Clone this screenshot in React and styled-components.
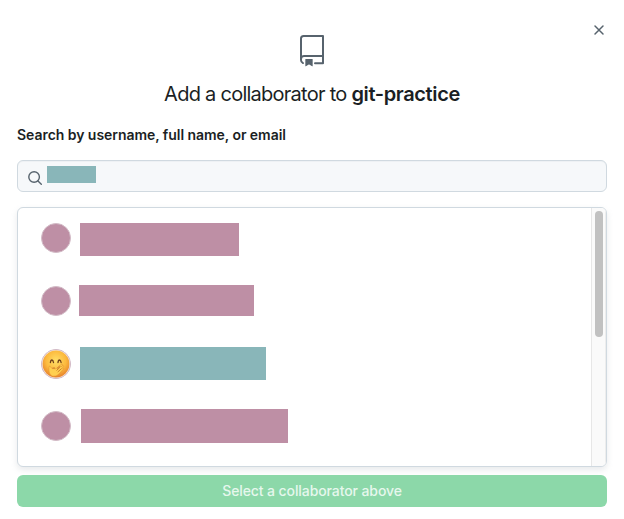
import React from "react";
import styled, { createGlobalStyle } from "styled-components";

const GlobalStyle = createGlobalStyle`
  *, *::before, *::after { box-sizing: border-box; }
  body { margin: 0; background: #fff; overflow: hidden; }
`;

const Dialog = styled.main`
  position: relative;
  display: flex;
  flex-direction: column;
  width: 624px;
  height: 519px;
  padding: 35px 17px 0;
  background: #fff;
  color: #1b1f24;
  font-family: Inter, "Liberation Sans", sans-serif;
`;

const CloseButton = styled.button`
  position: absolute;
  top: 22px;
  right: 17px;
  display: flex;
  padding: 0;
  border: 0;
  background: none;
  color: #57636d;
`;

const RepoIcon = styled.svg`
  display: block;
  align-self: center;
  width: 32px;
  height: 32px;
  fill: #57636d;
`;

const Title = styled.h1`
  margin: 12px 0 0;
  height: 30px;
  text-align: center;
  white-space: nowrap;
  font-size: 20px;
  line-height: 30px;
  font-weight: 400;
  letter-spacing: -0.74px;
  strong {
    font-weight: 600;
    letter-spacing: -0.37px;
  }
`;

const Label = styled.label`
  margin-top: 16px;
  height: 20px;
  white-space: nowrap;
  font-size: 14px;
  line-height: 20px;
  font-weight: 600;
  letter-spacing: -0.045px;
`;

const SearchField = styled.div`
  display: flex;
  align-items: flex-start;
  flex: none;
  height: 32px;
  margin-top: 15px;
  padding: 5px 9px;
  border: 1px solid #d0d9e0;
  border-radius: 6px;
  background: #f6f8fa;
  box-shadow: inset 0 1px 0 rgba(208, 215, 222, 0.2);
`;

const SearchIcon = styled.svg`
  width: 16px;
  height: 16px;
  margin-top: 4px;
  fill: none;
  stroke: #57636d;
  stroke-width: 1.4;
  stroke-linecap: round;
`;

const Query = styled.span`
  width: 49px;
  height: 17px;
  margin-left: 4px;
  background: #89b6b9;
`;

const Results = styled.section`
  display: flex;
  flex: none;
  height: 260px;
  margin-top: 15px;
  border: 1px solid #d0d9e0;
  border-radius: 6px;
  overflow: hidden;
  background: #fff;
  box-shadow: 0 3px 6px rgba(140, 149, 159, 0.2);
`;

const ResultList = styled.ul`
  flex: 1;
  margin: 0;
  padding: 15px 0 0 23px;
  list-style: none;
`;

const ResultRow = styled.li`
  display: flex;
  align-items: flex-start;
  height: 62px;
`;

const Avatar = styled.span`
  flex: none;
  display: block;
  width: 30px;
  height: 30px;
  margin-top: ${(p) => p.$drop || 0}px;
  border: 1px solid #d3bcc7;
  border-radius: 50%;
  overflow: hidden;
  background: #be8fa5;
  svg { display: block; width: 28px; height: 28px; }
`;

const NameBlock = styled.span`
  width: ${(p) => p.$width}px;
  height: ${(p) => p.$height}px;
  margin-left: ${(p) => p.$gap}px;
  background: ${(p) => (p.$teal ? "#89b6b9" : "#be8fa5")};
`;

const ScrollTrack = styled.div`
  flex: none;
  width: 15px;
  padding: 3px 0 0 3px;
  border-left: 1px solid #e7e7e7;
  border-right: 1px solid #ededed;
  background: #fafafa;
`;

const ScrollThumb = styled.div`
  width: 8px;
  height: 126px;
  border-radius: 4px;
  background: #c1c1c1;
`;

const SubmitButton = styled.button`
  flex: none;
  height: 32px;
  margin-top: 8px;
  padding: 0;
  border: 0;
  border-radius: 6px;
  background: #8cd8a9;
  color: #e6f7ed;
  font-family: inherit;
  font-size: 14px;
  line-height: 32px;
  font-weight: 500;
  letter-spacing: -0.1px;
`;

const GigglingFace = () => (
  <svg viewBox="0 0 28 28">
    <defs>
      <radialGradient id="face" cx="50%" cy="38%" r="62%">
        <stop offset="0" stopColor="#ffdf68" />
        <stop offset="0.6" stopColor="#fcba3e" />
        <stop offset="1" stopColor="#e7822c" />
      </radialGradient>
    </defs>
    <rect width="28" height="28" fill="#f6eadb" />
    <circle cx="14" cy="14" r="13.4" fill="url(#face)" />
    <g fill="none" stroke="#70401b" strokeLinecap="round">
      <path strokeWidth="1.3" d="M8.4 12.5q.3-2.5 1.5-2.5t1.6 2.5M16 12.5q.3-2.5 1.5-2.5t1.6 2.5" />
    </g>
    <path fill="#ffcf50" stroke="#e08c30" strokeWidth=".5" d="M7 17q.3-1.8 1.4-.4l1.6 2 4 .2 5.5-4.5q1.2-.5.9.9l-1.2 1.5 2-1.2q1 .1.3 1.3l-1.4 1.5 1-.3q.9.4.1 1.3L17 24q-3 3-6.3 2.2Q7 25 7 21Z" />
    <path fill="none" stroke="#b75f20" strokeWidth=".7" d="M10.5 18h2.5M14.5 20.5l4-3.8M15.7 22l4-3.5M15 18.5l2.7-2.4" />
  </svg>
);

const people = [
  { width: 159, height: 33, gap: 9 },
  { width: 175, height: 31, gap: 8, drop: 1 },
  { width: 186, height: 33, gap: 9, drop: 2, teal: true, face: true },
  { width: 207, height: 34, gap: 10, drop: 2 },
];

export default function App() {
  return (
    <>
      <GlobalStyle />
      <Dialog>
        <CloseButton aria-label="Close dialog">
          <svg width="16" height="16" fill="none" stroke="currentColor" strokeWidth="1.5" strokeLinecap="round">
            <path d="m4 4 8 8m0-8-8 8" />
          </svg>
        </CloseButton>
        <RepoIcon viewBox="0 0 24 24">
          <path d="M3 2.75A2.75 2.75 0 0 1 5.75 0h14.5a.75.75 0 0 1 .75.75v20.5a.75.75 0 0 1-.75.75h-6a.75.75 0 0 1 0-1.5h5.25v-4H6A1.5 1.5 0 0 0 4.5 18v.75c0 .716.43 1.334 1.05 1.605a.75.75 0 0 1-.6 1.374A3.251 3.251 0 0 1 3 18.75ZM19.5 1.5H5.75c-.69 0-1.25.56-1.25 1.25v12.651A2.989 2.989 0 0 1 6 15h13.5Z" />
          <path d="M7 18.25a.25.25 0 0 1 .25-.25h5a.25.25 0 0 1 .25.25v5.01a.25.25 0 0 1-.397.201l-2.206-1.304a.25.25 0 0 0-.294 0L7.397 23.46a.25.25 0 0 1-.397-.2Z" />
        </RepoIcon>
        <Title>Add a collaborator to <strong>git-practice</strong></Title>
        <Label>Search by username, full name, or email</Label>
        <SearchField>
          <SearchIcon viewBox="0 0 16 16">
            <circle cx="7.1" cy="7" r="5.3" />
            <path d="m11 11 3.3 3.3" />
          </SearchIcon>
          <Query />
        </SearchField>
        <Results>
          <ResultList>
            {people.map((p, i) => (
              <ResultRow key={i}>
                <Avatar $drop={p.drop}>{p.face && <GigglingFace />}</Avatar>
                <NameBlock $width={p.width} $height={p.height} $gap={p.gap} $teal={p.teal} />
              </ResultRow>
            ))}
          </ResultList>
          <ScrollTrack><ScrollThumb /></ScrollTrack>
        </Results>
        <SubmitButton>Select a collaborator above</SubmitButton>
      </Dialog>
    </>
  );
}
